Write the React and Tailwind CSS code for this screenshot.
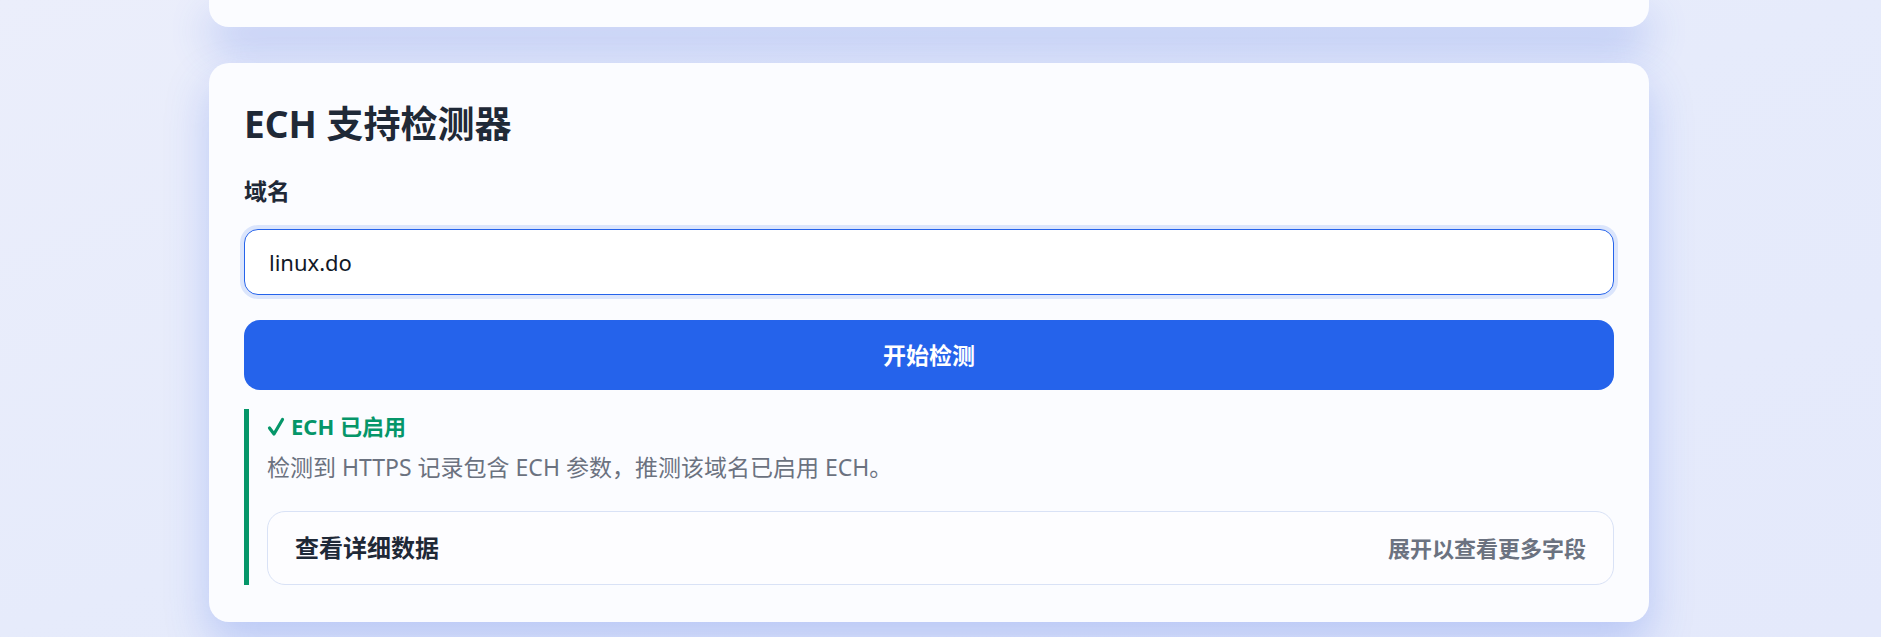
// eslint-disable-next-line no-unused-vars
import React from 'react';

const font = "font-['Noto_Sans','Noto_Sans_CJK_SC',sans-serif]";

export default function App() {
    return (
        <div className={`min-h-screen bg-gradient-to-br from-[#ebeefb] via-[#e6ebfb] to-[#e4e9fb] ${font}`}>
            <div className="pr-[23px]">
                <div className="mx-auto max-w-[1440px] flex flex-col gap-[36px]">
                    {/* previous card, scrolled mostly out of view */}
                    <div className="h-[27px] rounded-b-[20px] bg-[#fbfcff] shadow-[0_20px_40px_rgba(59,100,230,0.32)]" />

                    <section className="rounded-[20px] bg-[#fbfcff] px-[35px] pt-[36px] pb-[37px] shadow-[0_20px_44px_rgba(59,100,230,0.26)]">
                        <h1 className="text-[37px] font-bold leading-[50px] text-[#1f2937]">
                            ECH 支持检测器
                        </h1>

                        <label className="mt-[25px] block text-[23px] font-bold leading-[34px] text-[#1f2937]">
                            域名
                        </label>

                        <input
                            readOnly
                            value="linux.do"
                            className="mt-[21px] block h-[66px] w-full rounded-[14px] border border-[#2563eb] bg-white px-[24px] text-[22px] text-[#111827] outline-none ring-4 ring-[#2563eb]/15"
                        />

                        <button className="mt-[25px] flex h-[70px] w-full items-center justify-center rounded-[16px] bg-[#2563eb] text-[23px] font-bold text-white">
                            开始检测
                        </button>

                        <div className="mt-[19px] border-l-[5px] border-[#059669] pl-[18px]">
                            <div className="flex items-center gap-[6px] text-[22px] font-bold leading-[34px] text-[#059669]">
                                <svg width="18" height="20" viewBox="0 0 18 20" fill="none" className="mt-[2px]">
                                    <path d="M2.5 11 L7 17 L15.5 2.5" stroke="#059669" strokeWidth="3.2" strokeLinecap="round" strokeLinejoin="round" />
                                </svg>
                                <span>ECH 已启用</span>
                            </div>
                            <p className="mt-[7px] text-[23px] leading-[34px] text-[#6b7280]">
                                检测到 HTTPS 记录包含 ECH 参数，推测该域名已启用 ECH。
                            </p>

                            <div className="mt-[27px] flex h-[74px] items-center justify-between rounded-[18px] border border-[#d9e2f6] bg-[#fdfdff] px-[27px]">
                                <span className="text-[24px] font-bold text-[#1f2937]">查看详细数据</span>
                                <span className="text-[22px] font-bold text-[#6b7280]">展开以查看更多字段</span>
                            </div>
                        </div>
                    </section>
                </div>
            </div>
        </div>
    );
}
